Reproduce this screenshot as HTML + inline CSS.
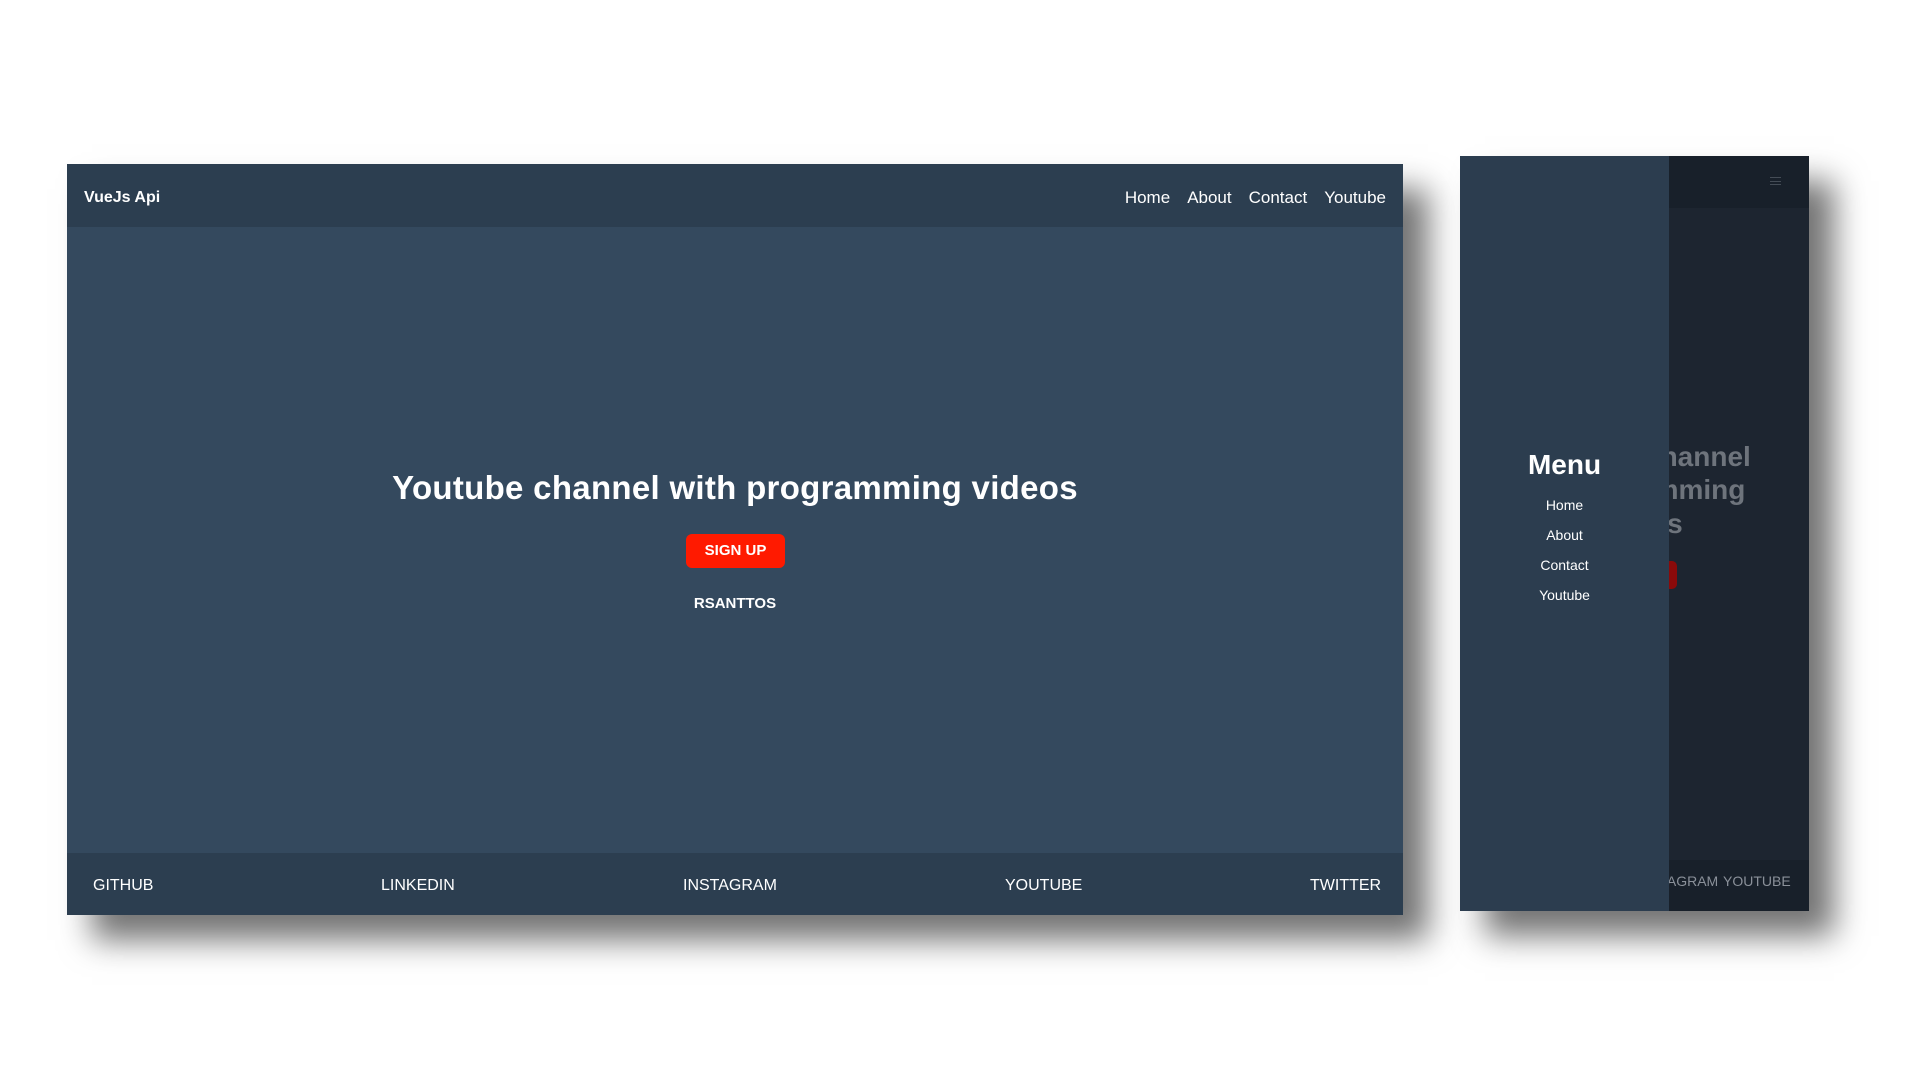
<!DOCTYPE html>
<html><head><meta charset="utf-8"><style>
*{margin:0;padding:0;box-sizing:border-box}
body{width:1920px;height:1080px;background:#fff;position:relative;overflow:hidden;font-family:"Liberation Sans",sans-serif;color:#fff}
.f1{position:absolute;left:67px;top:164px;width:1336px;height:751px;background:#34495e;box-shadow:25px 25px 30px rgba(0,0,0,.55)}
.nav{position:absolute;left:0;top:0;width:100%;height:63px;background:#2c3e50}
.brand{position:absolute;left:17px;top:25px;font-weight:bold;font-size:16px}
.links{position:absolute;right:17px;top:24px;font-size:17px;display:flex;gap:17px}
.h1{position:absolute;left:0;width:100%;top:305px;text-align:center;font-weight:bold;font-size:33px;letter-spacing:.3px}
.btn{position:absolute;left:619px;top:370px;width:99px;height:34px;background:#ff1a00;border-radius:6px;text-align:center;line-height:34px;font-weight:bold;font-size:15px}
.rs{position:absolute;left:0;width:100%;top:431px;text-align:center;font-weight:bold;font-size:15px}
.foot{position:absolute;left:0;bottom:0;width:100%;height:62px;background:#2c3e50;font-size:16px}
.foot span{position:absolute;top:24px}
.f2{position:absolute;left:1460px;top:156px;width:349px;height:755px;background:#1d2530;box-shadow:25px 25px 30px rgba(0,0,0,.55);overflow:hidden}
.f2 .n{position:absolute;left:0;top:0;width:100%;height:52px;background:#18202a}
.gray{position:absolute;color:#6e747c;font-weight:bold;font-size:28px}
.drawer{position:absolute;left:0;top:0;width:209px;height:100%;background:#2c3d4f}
.menu{position:absolute;left:0;width:209px;text-align:center}
</style></head><body>
<div class="f1">
 <div class="nav"><div class="brand">VueJs Api</div>
 <div class="links"><span>Home</span><span>About</span><span>Contact</span><span>Youtube</span></div></div>
 <div class="h1">Youtube channel with programming videos</div>
 <div class="btn">SIGN UP</div>
 <div class="rs">RSANTTOS</div>
 <div class="foot"><span style="left:26px">GITHUB</span><span style="left:314px">LINKEDIN</span><span style="left:616px">INSTAGRAM</span><span style="left:938px">YOUTUBE</span><span style="left:1243px">TWITTER</span></div>
</div>
<div class="f2">
 <div class="n"><div style="position:absolute;left:310px;top:21px;width:11px;height:8px;border-top:1px solid #444c56;border-bottom:1px solid #444c56"></div><div style="position:absolute;left:310px;top:25px;width:11px;height:1px;background:#444c56"></div></div>
 <div class="gray" style="left:185px;top:285px">channel</div>
 <div class="gray" style="left:150px;top:318px">gramming</div>
 <div class="gray" style="left:190px;top:352px">os</div>
 <div style="position:absolute;left:180px;top:405px;width:37px;height:28px;background:#8a0a0a;border-radius:5px"></div>
 <div style="position:absolute;left:180px;top:446px;color:#6e747c;font-size:14px;font-weight:bold">OS</div>
 <div style="position:absolute;left:0;top:704px;width:100%;height:51px;background:#18202a;color:#8a9099;font-size:14px"><span style="position:absolute;left:176px;top:13px">INSTAGRAM</span><span style="position:absolute;left:263px;top:13px">YOUTUBE</span></div>
 <div class="drawer">
  <div class="menu" style="top:293px;font-weight:bold;font-size:28px">Menu</div>
  <div class="menu" style="top:341px;font-size:14px">Home</div>
  <div class="menu" style="top:371px;font-size:14px">About</div>
  <div class="menu" style="top:401px;font-size:14px">Contact</div>
  <div class="menu" style="top:431px;font-size:14px">Youtube</div>
 </div>
</div>
</body></html>
